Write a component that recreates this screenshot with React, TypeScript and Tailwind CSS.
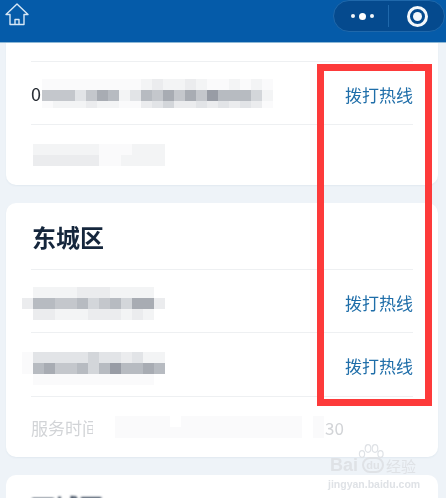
import React from 'react';

const shades: Record<string, string> = {
  '.': 'bg-transparent',
  w: 'bg-white',
  a: 'bg-[#fafafb]',
  b: 'bg-[#f3f4f5]',
  c: 'bg-[#ebecee]',
  d: 'bg-[#e2e4e7]',
  e: 'bg-[#d3d6da]',
  f: 'bg-[#c4c7cc]',
  g: 'bg-[#b7bbc1]',
  h: 'bg-[#a8acb3]',
  i: 'bg-[#989ca5]',
};

// each string is one row of 11px cells
const Mosaic: React.FC<{ rows: string[]; className?: string; lastRowShort?: boolean }> = ({ rows, className, lastRowShort }) => (
  <div className={`flex flex-col ${className ?? ''}`}>
    {rows.map((row, i) => (
      <div key={i} className={`flex ${lastRowShort && i === rows.length - 1 ? 'h-[7px]' : 'h-[11px]'}`}>
        {row.split('').map((c, j) => (
          <div key={j} className={`w-[11px] shrink-0 ${shades[c]}`} />
        ))}
      </div>
    ))}
  </div>
);

const CallLink = () => (
  <span className="pt-[2px] text-[17px] leading-none text-[#1f6ea9] whitespace-nowrap">拨打热线</span>
);

const Row: React.FC<{ children?: React.ReactNode; call?: boolean; tall?: boolean }> = ({ children, call, tall }) => (
  <div className={`${tall ? 'h-[64px]' : 'h-[63px]'} border-t border-[#eef0f2] flex items-center justify-between`}>
    <div>{children}</div>
    {call && <CallLink />}
  </div>
);

const HomeIcon = () => (
  <svg width="24" height="23" viewBox="0 0 24 23" fill="none" stroke="#d7e7f5" strokeWidth="1.4" strokeLinejoin="round">
    <path d="M12 1 L23 11.5 H19 V21.5 H5 V11.5 H1 Z" />
    <path d="M10 21.5 V16.5 H14 V21.5" />
  </svg>
);

const App: React.FC = () => {
  return (
    <div className="relative w-[446px] h-[498px] overflow-hidden bg-[#eef3f8] font-['Noto_Sans_CJK_SC','Noto_Sans',sans-serif] blur-[0.3px]">
      {/* title bar */}
      <header className="h-[43px] bg-[#055ba9] border-b border-[#8db8d6] flex justify-between items-start pl-[5px] pr-px">
        <div className="pt-[3px]">
          <HomeIcon />
        </div>
        <div className="w-[112px] h-[32px] rounded-[16px] bg-[#054a8e] border border-[#1f68ab] flex items-center">
          <div className="w-[54px] flex items-center justify-center gap-[4px] pl-[3px]">
            <span className="w-[4px] h-[4px] rounded-full bg-[#f2f6fa]" />
            <span className="w-[7px] h-[7px] rounded-full bg-white" />
            <span className="w-[4px] h-[4px] rounded-full bg-[#f2f6fa]" />
          </div>
          <div className="w-px h-[22px] bg-[#1f68ab]" />
          <div className="flex-1 flex items-center justify-center pl-[2px]">
            <div className="w-[21px] h-[21px] rounded-full border-[3px] border-[#f4f8fb] flex items-center justify-center">
              <div className="w-[9px] h-[9px] rounded-full bg-[#f4f8fb]" />
            </div>
          </div>
        </div>
      </header>

      <div className="pl-[6px] pr-[8px] flex flex-col gap-[18px]">
        {/* card cut off by the title bar */}
        <section className="h-[142px] bg-white rounded-b-[10px] px-[25px] pt-[18px] shadow-[0_1px_2px_rgba(40,80,120,0.06)]">
          <Row call>
            <div className="flex items-center">
              <span className="text-[18px] leading-none text-[#2a2f36]">0</span>
              <Mosaic
                className="ml-[1px]"
                lastRowShort
                rows={[
                  'aaaaaaaaabcbbcbaababa',
                  'fffdfhgbdgfhfhfigggeb',
                  'abbbcbbaacdeccdcdcdca',
                ]}
              />
            </div>
          </Row>
          <Row>
            <Mosaic
              className="ml-[2px] -translate-y-[1px]"
              rows={['bbbbbbaaabbb', 'ccccccaabbbb']}
            />
          </Row>
        </section>

        <section className="h-[254px] bg-white rounded-[10px] px-[25px] shadow-[0_1px_2px_rgba(40,80,120,0.06)]">
          <h2 className="h-[66px] flex items-center pl-px pt-px text-[24px] font-bold leading-none text-[#15263c]">东城区</h2>
          <Row call>
            <Mosaic
              className="-ml-[9px] mt-[5px]"
              rows={['.bbbbcccbbbb', 'cggffgefgehhc', '.ccbbbcccbcb']}
            />
          </Row>
          <Row call tall>
            <Mosaic
              className="-ml-[9px] mt-[8px]"
              rows={['adddddeddcdbb', 'aghffgegigghg', '.aaaaaaaaaaa']}
            />
          </Row>
          <div className="h-[61px] border-t border-[#eef0f2] flex items-center text-[17px] leading-none text-[#d2d4d7] whitespace-nowrap">
            <span>服务时间</span>
            <Mosaic
              className="relative -ml-[6px]"
              rows={['wwaaaaawaaaaaaaaaaawa', 'wwaaaaaaaaaaaaaaaaawa']}
            />
            <span className="ml-px">30</span>
          </div>
        </section>

        <section className="h-[60px] bg-white rounded-t-[10px] px-[25px] pt-[20px]">
          <div className="text-[24px] font-bold leading-none text-[#15263c] blur-[1px]">西城区</div>
        </section>
      </div>

      {/* annotation frame drawn on the screenshot */}
      <div className="absolute left-[317px] top-[64px] w-[115px] h-[342px] border-[7px] border-[#fd3a3a]" />

      {/* baidu watermark */}
      <div className="absolute left-[328px] top-[444px] w-[92px] text-[#dfe2e6] leading-none font-['Liberation_Sans',sans-serif]">
        <svg className="ml-[30px]" width="26" height="16" viewBox="0 0 26 16" fill="none" stroke="#dfe2e6" strokeWidth="1.2">
          <ellipse cx="4" cy="10" rx="2.6" ry="3.4" />
          <ellipse cx="10" cy="4.5" rx="2.8" ry="3.8" />
          <ellipse cx="17" cy="4.5" rx="2.8" ry="3.8" />
          <ellipse cx="22.5" cy="10" rx="2.6" ry="3.4" />
        </svg>
        <div className="-mt-[4px] flex items-center gap-[2px] text-[18px] font-bold">
          <span className="ml-[2px] w-[30px]">Bai</span>
          <span className="w-[22px] h-[16px] flex items-center justify-center border-2 border-[#dfe2e6] rounded-full text-[11px]">du</span>
          <span className="text-[15px] font-normal whitespace-nowrap font-['Noto_Sans_CJK_SC',sans-serif]">经验</span>
        </div>
        <div className="mt-[5px] text-[10.5px] font-bold whitespace-nowrap">jingyan.baidu.com</div>
      </div>
    </div>
  );
};

export default App;
